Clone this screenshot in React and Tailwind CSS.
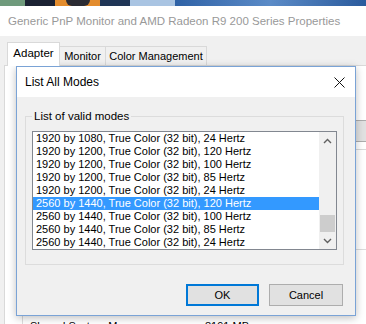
const modes = [
  "1920 by 1080, True Color (32 bit), 24 Hertz",
  "1920 by 1200, True Color (32 bit), 120 Hertz",
  "1920 by 1200, True Color (32 bit), 100 Hertz",
  "1920 by 1200, True Color (32 bit), 85 Hertz",
  "1920 by 1200, True Color (32 bit), 24 Hertz",
  "2560 by 1440, True Color (32 bit), 120 Hertz",
  "2560 by 1440, True Color (32 bit), 100 Hertz",
  "2560 by 1440, True Color (32 bit), 85 Hertz",
  "2560 by 1440, True Color (32 bit), 24 Hertz",
];

const selected = 5;

function Chevron({ up }) {
  return (
    <svg width="9" height="6" viewBox="0 0 9 6">
      <polyline
        points={up ? "1,5 4.5,1.5 8,5" : "1,1 4.5,4.5 8,1"}
        fill="none"
        stroke="#606060"
        strokeWidth="1.4"
      />
    </svg>
  );
}

export default function App() {
  return (
    <div className="relative w-[366px] h-[324px] overflow-hidden bg-[#f0f0f0] text-[11px] text-black font-['Liberation_Sans',Arial,sans-serif]">
      {/* Desktop wallpaper strip */}
      <div className="flex h-[6px]">
        <div className="w-[25px] bg-[#6f9a7c]" />
        <div className="w-[30px] bg-[#1b2233]" />
        <div className="w-[45px] bg-[#e38c2d] flex justify-center">
          <div className="w-[24px] h-[6px] rounded-b-full bg-[#2b2b33]" />
        </div>
        <div className="w-[30px] bg-[#1f3556]" />
        <div className="w-[45px] bg-[#a9c4e2]" />
        <div className="flex-1 bg-gradient-to-r from-[#2f62a6] via-[#5b8bc7] to-[#2a5a9c]" />
      </div>

      {/* Window title */}
      <div className="h-[30px] bg-white flex items-center pl-[8px] pt-[2px] text-[#999999] text-[11.5px] whitespace-nowrap">
        Generic PnP Monitor and AMD Radeon R9 200 Series Properties
      </div>

      {/* Tabs */}
      <div className="flex items-end h-[29px] pl-[7px] whitespace-nowrap">
        <div className="h-[24px] w-[53px] bg-white border border-b-0 border-[#d9d9d9] flex items-center justify-center relative z-10 -mb-px pb-[2px] text-[11.5px]">
          Adapter
        </div>
        <div className="h-[19px] w-[46px] border border-l-0 border-b-0 border-[#d9d9d9] flex items-center justify-center">
          Monitor
        </div>
        <div className="h-[19px] w-[101px] border border-l-0 border-b-0 border-[#d9d9d9] flex items-center justify-center">
          Color Management
        </div>
      </div>

      {/* Tab page */}
      <div className="ml-[4px] mr-[-4px] h-[270px] bg-white border border-[#d9d9d9] pt-[54px]">
        <div className="flex justify-end pr-[2px]">
          <div className="w-[90px] h-[22px] bg-[#e1e1e1] border border-[#adadad]" />
        </div>
        <div className="mt-[7px] ml-[250px] border-t border-[#d9d9d9]" />
        <div className="mt-[99px] ml-[17px] h-[90px] border-l border-t border-[#dcdcdc] flex pt-[68px] pl-[7px] whitespace-nowrap">
          <span className="w-[175px]">Shared System Memory:</span>
          <span>8191 MB</span>
        </div>
      </div>

      {/* List All Modes dialog */}
      <div className="absolute left-[16px] top-[66px] w-[340px] h-[250px] border border-[#7aa3d6] bg-[#f0f0f0] shadow-[0_2px_8px_rgba(0,0,0,0.25)] flex flex-col">
        <div className="h-[30px] bg-white flex items-center justify-between pl-[8px] pr-[10px]">
          <span className="text-[12px]">List All Modes</span>
          <svg width="11" height="11" viewBox="0 0 11 11">
            <path d="M0.5 0.5 L10.5 10.5 M10.5 0.5 L0.5 10.5" stroke="#111" strokeWidth="1" />
          </svg>
        </div>

        <fieldset className="mt-[11px] ml-[8px] mr-[11px] border border-[#dcdcdc] pb-[14px] px-[6px]">
          <legend className="ml-0 px-[2px] leading-[16px] text-[11.5px] whitespace-nowrap">List of valid modes</legend>
          <div className="mt-[7px] h-[119px] border border-[#828790] bg-white flex">
            <div className="flex-1 flex flex-col">
              {modes.map((m, i) => (
                <div
                  key={i}
                  className={`h-[13px] leading-[13px] pl-[3px] whitespace-nowrap ${
                    i === selected ? "bg-[#3399ff] text-white" : ""
                  }`}
                >
                  {m}
                </div>
              ))}
            </div>
            <div className="w-[17px] bg-[#f0f0f0] flex flex-col">
              <div className="h-[17px] flex items-center justify-center">
                <Chevron up />
              </div>
              <div className="flex-1 flex flex-col">
                <div className="h-[66px]" />
                <div className="h-[17px] bg-[#cdcdcd] mx-px" />
              </div>
              <div className="h-[17px] flex items-center justify-center">
                <Chevron />
              </div>
            </div>
          </div>
        </fieldset>

        <div className="mt-[19px] flex justify-end gap-[10px] pr-[12px]">
          <button className="w-[73px] h-[22px] bg-[#e1e1e1] border-2 border-[#0078d7]">OK</button>
          <button className="w-[74px] h-[22px] bg-[#e1e1e1] border border-[#adadad]">Cancel</button>
        </div>
      </div>
    </div>
  );
}
